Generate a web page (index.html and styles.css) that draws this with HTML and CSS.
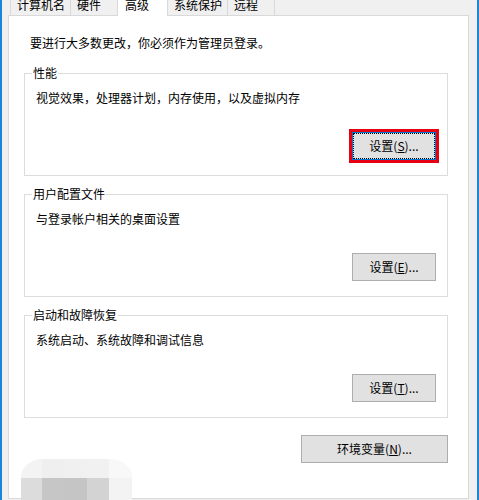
FILE: index.html
```html
<!DOCTYPE html>
<html lang="zh-CN">
<head>
  <meta charset="UTF-8" />
  <title>系统属性 - 高级</title>
  <link rel="stylesheet" href="styles.css">
</head>
<body>
  <div class="window">
    <div class="tabs">
      <div class="tab first">计算机名</div>
      <div class="tab">硬件</div>
      <div class="tab active">高级</div>
      <div class="tab">系统保护</div>
      <div class="tab">远程</div>
    </div>

    <div class="panel">
      <p class="note">要进行大多数更改，你必须作为管理员登录。</p>

      <fieldset class="group">
        <legend>性能</legend>
        <p>视觉效果，处理器计划，内存使用，以及虚拟内存</p>
        <div class="actions">
          <button class="btn focused">设置(<u>S</u>)...</button>
        </div>
      </fieldset>

      <fieldset class="group">
        <legend>用户配置文件</legend>
        <p>与登录帐户相关的桌面设置</p>
        <div class="actions">
          <button class="btn">设置(<u>E</u>)...</button>
        </div>
      </fieldset>

      <fieldset class="group">
        <legend>启动和故障恢复</legend>
        <p>系统启动、系统故障和调试信息</p>
        <div class="actions">
          <button class="btn">设置(<u>T</u>)...</button>
        </div>
      </fieldset>

      <div class="footer">
        <button class="btn wide">环境变量(<u>N</u>)...</button>
      </div>
    </div>

    <!-- pixelated blot over the lower left corner -->
    <div class="mosaic">
      <span class="c1"></span><span class="c2"></span><span class="c3"></span><span class="c4"></span><span class="c5"></span>
      <span class="d1"></span><span class="d2"></span><span class="d3"></span><span class="d4"></span><span class="d5"></span>
    </div>
  </div>
</body>
</html>
```

FILE: styles.css
```css
/* Reset and base */
* {
  box-sizing: border-box;
}

html, body {
  margin: 0;
  height: 100%;
}

body {
  background: #f0f0f0;
  font-family: "Noto Sans CJK SC", "Noto Sans", sans-serif;
  font-size: 12px;
  color: #000;
  overflow: hidden;
}

.window {
  position: relative;
  height: 500px;
  border-left: 2px solid #1a86d8;
  border-right: 2px solid #1a86d8;
  padding: 0 8px 0 6px;
}

/* Tab strip */
.tabs {
  display: flex;
  align-items: flex-end;
  height: 15px;
  padding-left: 2px;
}

.tab {
  height: 21px;
  line-height: 21px;
  min-width: 47px;
  padding: 0 5px 0 6px;
  border-right: 1px solid #d9d9d9;
  background: #f0f0f0;
  white-space: nowrap;
}

.tab.first {
  border-left: 1px solid #d9d9d9;
}

.tab.active {
  position: relative;
  z-index: 1;
  height: 22px;
  min-width: 51px;
  margin-left: -1px;
  margin-bottom: -1px;
  padding-left: 7px;
  border-left: 1px solid #d9d9d9;
  background: #fff;
}

/* Page */
.panel {
  height: 484px;
  background: #fff;
  border: 1px solid #d9d9d9;
  padding: 19px 20px 0 15px;
}

.note {
  margin: 0 0 14px 6px;
  line-height: 16px;
}

.group {
  margin: 0;
  min-width: 0;
  border: 1px solid #dcdcdc;
  padding: 9px 11px 15px 11px;
}

.group + .group {
  margin-top: 10px;
}

.group legend {
  margin-left: -4px;
  padding: 0 1px;
  line-height: 16px;
}

.group p {
  margin: 0;
  line-height: 16px;
}

.actions {
  display: flex;
  justify-content: flex-end;
  margin-top: 26px;
}

.footer {
  display: flex;
  justify-content: flex-end;
  margin-top: 17px;
}

/* Buttons */
.btn {
  position: relative;
  width: 84px;
  height: 28px;
  padding: 0;
  font: inherit;
  line-height: 26px;
  color: #000;
  background: #e1e1e1;
  border: 1px solid #adadad;
}

.btn.wide {
  width: 147px;
}

.btn.focused {
  border-color: #0078d7;
  outline: 3px solid #e60012;
}

.btn.focused::before {
  content: "";
  position: absolute;
  inset: 0;
  border: 1px dotted #000;
}

/* Mosaic blot */
.mosaic {
  position: absolute;
  left: 19px;
  top: 459px;
  width: 111px;
  height: 44px;
  display: grid;
  grid-template-columns: 21px 23px 22px 22px 23px;
  grid-template-rows: 19px 25px;
  border-radius: 22px 22px 0 0 / 18px 18px 0 0;
  overflow: hidden;
  filter: blur(0.6px);
}

.c1 { background: #f3f3f3; }
.c2 { background: #efefef; }
.c3 { background: #f0f0f0; }
.c4 { background: #f1f1f1; }
.c5 { background: #f8f8f8; }
.d1 { background: #dcdcdc; }
.d2 { background: #c6c6c6; }
.d3 { background: #c5c5c5; }
.d4 { background: #d3d3d3; }
.d5 { background: #f3f3f3; }
```
